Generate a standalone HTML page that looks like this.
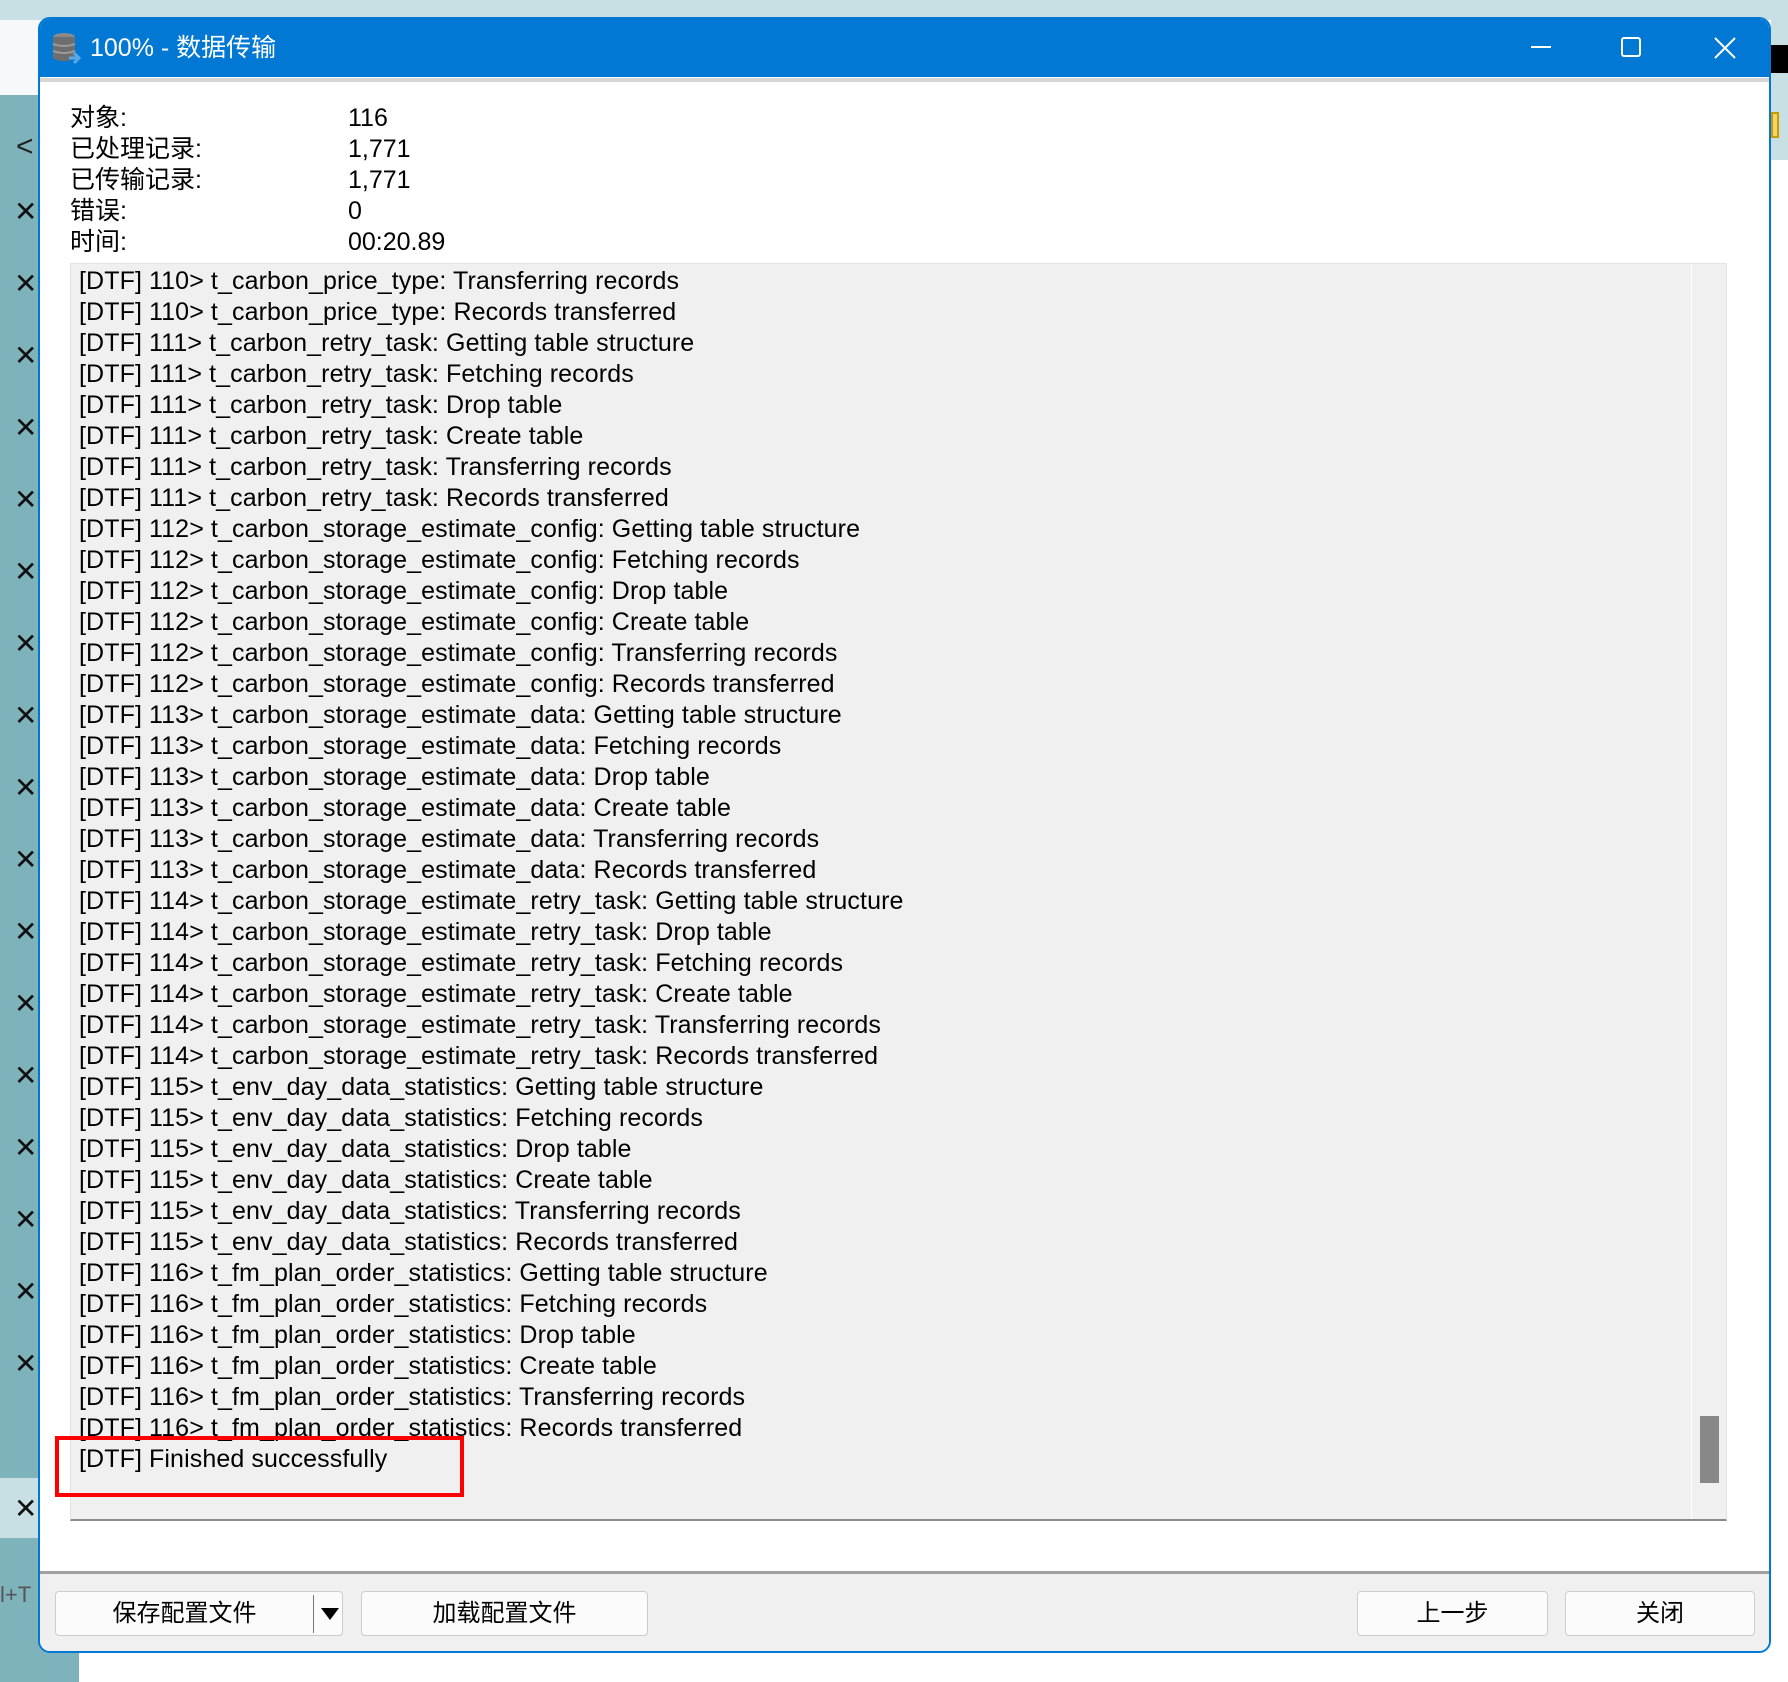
<!DOCTYPE html>
<html><head><meta charset="utf-8">
<style>
*{margin:0;padding:0;box-sizing:border-box}
body{width:1788px;height:1682px;position:relative;overflow:hidden;background:#fff;font-family:"Liberation Sans","Noto Sans CJK SC",sans-serif;color:#000}
.abs{position:absolute}
#top{left:0;top:0;width:1788px;height:20px;background:#c8dfe3}
#lstrip{left:0;top:95px;width:40px;height:1587px;background:#7fb3bb}
#lbot{left:0;top:1640px;width:79px;height:42px;background:#7fb3bb}
.x{position:absolute;left:14px;font-size:28px;color:#111;line-height:28px}
#win{left:38px;top:17px;width:1733px;height:1636px;border:2px solid #0078d4;border-radius:12px;background:#fff;overflow:hidden}
#title{left:0;top:0;width:100%;height:58px;background:#0078d4}
#tt{left:50px;top:11px;color:#fff;font-size:25px;line-height:36px}
#gline{left:0;top:59px;width:100%;height:4px;background:#d6d6d6}
.st{position:absolute;font-size:25px;line-height:31px}
#log{left:30px;top:244px;width:1657px;height:1258px;background:#f0f0f0;border:1px solid #e2e2e2;border-bottom:2px solid #8a8a8a}
#sb{left:1620px;top:0;width:35px;height:100%;border-left:1px solid #fff}
#thumb{left:8px;top:1152px;width:19px;height:67px;background:#888}
#lines{left:8px;top:2px;font-size:25px;line-height:31px;letter-spacing:0.1px;white-space:pre}
#red{left:-16px;top:1172px;width:409px;height:61px;border:4px solid #f00}
#foot{left:0;top:1552px;width:100%;height:90px;background:#f0f0f0;border-top:3px solid #a0a0a0}
.btn{position:absolute;top:17px;height:45px;background:#fbfbfb;border:1px solid #ccc;border-radius:4px;font-size:24px;line-height:43px;text-align:center}
</style></head><body>
<div id="top" class="abs"></div>
<div class="abs" style="left:0;top:20px;width:40px;height:75px;background:#f6f8f9"></div>
<div id="lstrip" class="abs">
<div class="abs" style="left:16px;top:35px;font-size:30px;color:#222">&lt;</div>
<div class="x" style="top:103px">✕</div><div class="x" style="top:175px">✕</div><div class="x" style="top:247px">✕</div><div class="x" style="top:319px">✕</div><div class="x" style="top:391px">✕</div><div class="x" style="top:463px">✕</div><div class="x" style="top:535px">✕</div><div class="x" style="top:607px">✕</div><div class="x" style="top:679px">✕</div><div class="x" style="top:751px">✕</div><div class="x" style="top:823px">✕</div><div class="x" style="top:895px">✕</div><div class="x" style="top:967px">✕</div><div class="x" style="top:1039px">✕</div><div class="x" style="top:1111px">✕</div><div class="x" style="top:1183px">✕</div><div class="x" style="top:1255px">✕</div>
<div class="abs" style="left:0;top:1383px;width:40px;height:60px;background:#c8dfe3"></div>
<div class="x" style="top:1400px">✕</div>
<div class="abs" style="left:0;top:1487px;font-size:22px;color:#555">l+T</div>
</div>
<div id="lbot" class="abs"></div>
<div class="abs" style="left:1771px;top:45px;width:17px;height:28px;background:#000"></div>
<div class="abs" style="left:1771px;top:112px;width:8px;height:26px;background:#f5d46a;border:2px solid #c79a00"></div>
<div class="abs" style="left:1771px;top:20px;width:17px;height:140px;background:#c8dfe3;z-index:-1"></div>

<div id="win" class="abs">
 <div id="title" class="abs">
  <svg class="abs" style="left:12px;top:13px" width="32" height="34" viewBox="0 0 32 34">
   <ellipse cx="12" cy="5" rx="11" ry="4" fill="#8a8a8a"/>
   <rect x="1" y="5" width="22" height="20" fill="#6e6e6e"/>
   <ellipse cx="12" cy="25" rx="11" ry="4" fill="#6e6e6e"/>
   <path d="M1 12 Q12 16 23 12 M1 19 Q12 23 23 19" stroke="#9a9a9a" stroke-width="2" fill="none"/>
   <path d="M17 26 H26 M22 21 L27 26 L22 31" stroke="#5aa8e8" stroke-width="3" fill="none"/>
  </svg>
  <div id="tt" class="abs">100% - 数据传输</div>
  <div class="abs" style="left:1491px;top:27px;width:20px;height:2px;background:#fff"></div>
  <div class="abs" style="left:1581px;top:18px;width:20px;height:20px;border:2px solid #fff;border-radius:3px"></div>
  <svg class="abs" style="left:1674px;top:18px" width="22" height="22"><path d="M1 1L21 21M21 1L1 21" stroke="#fff" stroke-width="2"/></svg>
 </div>
 <div id="gline" class="abs"></div>
 <div class="st" style="left:30px;top:84px">对象:</div><div class="st" style="left:308px;top:84px">116</div>
 <div class="st" style="left:30px;top:115px">已处理记录:</div><div class="st" style="left:308px;top:115px">1,771</div>
 <div class="st" style="left:30px;top:146px">已传输记录:</div><div class="st" style="left:308px;top:146px">1,771</div>
 <div class="st" style="left:30px;top:177px">错误:</div><div class="st" style="left:308px;top:177px">0</div>
 <div class="st" style="left:30px;top:208px">时间:</div><div class="st" style="left:308px;top:208px">00:20.89</div>
 <div id="log" class="abs">
  <div id="lines" class="abs">[DTF] 110&gt; t_carbon_price_type: Transferring records
[DTF] 110&gt; t_carbon_price_type: Records transferred
[DTF] 111&gt; t_carbon_retry_task: Getting table structure
[DTF] 111&gt; t_carbon_retry_task: Fetching records
[DTF] 111&gt; t_carbon_retry_task: Drop table
[DTF] 111&gt; t_carbon_retry_task: Create table
[DTF] 111&gt; t_carbon_retry_task: Transferring records
[DTF] 111&gt; t_carbon_retry_task: Records transferred
[DTF] 112&gt; t_carbon_storage_estimate_config: Getting table structure
[DTF] 112&gt; t_carbon_storage_estimate_config: Fetching records
[DTF] 112&gt; t_carbon_storage_estimate_config: Drop table
[DTF] 112&gt; t_carbon_storage_estimate_config: Create table
[DTF] 112&gt; t_carbon_storage_estimate_config: Transferring records
[DTF] 112&gt; t_carbon_storage_estimate_config: Records transferred
[DTF] 113&gt; t_carbon_storage_estimate_data: Getting table structure
[DTF] 113&gt; t_carbon_storage_estimate_data: Fetching records
[DTF] 113&gt; t_carbon_storage_estimate_data: Drop table
[DTF] 113&gt; t_carbon_storage_estimate_data: Create table
[DTF] 113&gt; t_carbon_storage_estimate_data: Transferring records
[DTF] 113&gt; t_carbon_storage_estimate_data: Records transferred
[DTF] 114&gt; t_carbon_storage_estimate_retry_task: Getting table structure
[DTF] 114&gt; t_carbon_storage_estimate_retry_task: Drop table
[DTF] 114&gt; t_carbon_storage_estimate_retry_task: Fetching records
[DTF] 114&gt; t_carbon_storage_estimate_retry_task: Create table
[DTF] 114&gt; t_carbon_storage_estimate_retry_task: Transferring records
[DTF] 114&gt; t_carbon_storage_estimate_retry_task: Records transferred
[DTF] 115&gt; t_env_day_data_statistics: Getting table structure
[DTF] 115&gt; t_env_day_data_statistics: Fetching records
[DTF] 115&gt; t_env_day_data_statistics: Drop table
[DTF] 115&gt; t_env_day_data_statistics: Create table
[DTF] 115&gt; t_env_day_data_statistics: Transferring records
[DTF] 115&gt; t_env_day_data_statistics: Records transferred
[DTF] 116&gt; t_fm_plan_order_statistics: Getting table structure
[DTF] 116&gt; t_fm_plan_order_statistics: Fetching records
[DTF] 116&gt; t_fm_plan_order_statistics: Drop table
[DTF] 116&gt; t_fm_plan_order_statistics: Create table
[DTF] 116&gt; t_fm_plan_order_statistics: Transferring records
[DTF] 116&gt; t_fm_plan_order_statistics: Records transferred
[DTF] Finished successfully</div>
  <div id="sb" class="abs"><div id="thumb" class="abs"></div></div>
  <div id="red" class="abs"></div>
 </div>
 <div id="foot" class="abs">
  <div class="btn" style="left:15px;width:288px"><span style="position:absolute;left:0;width:257px">保存配置文件</span><span style="position:absolute;left:257px;top:3px;width:1px;height:38px;background:#777"></span><svg class="abs" style="left:265px;top:16px" width="18" height="12"><path d="M0 0H18L9 12Z" fill="#000"/></svg></div>
  <div class="btn" style="left:321px;width:287px">加载配置文件</div>
  <div class="btn" style="left:1317px;width:191px">上一步</div>
  <div class="btn" style="left:1525px;width:190px">关闭</div>
 </div>
</div>
</body></html>
